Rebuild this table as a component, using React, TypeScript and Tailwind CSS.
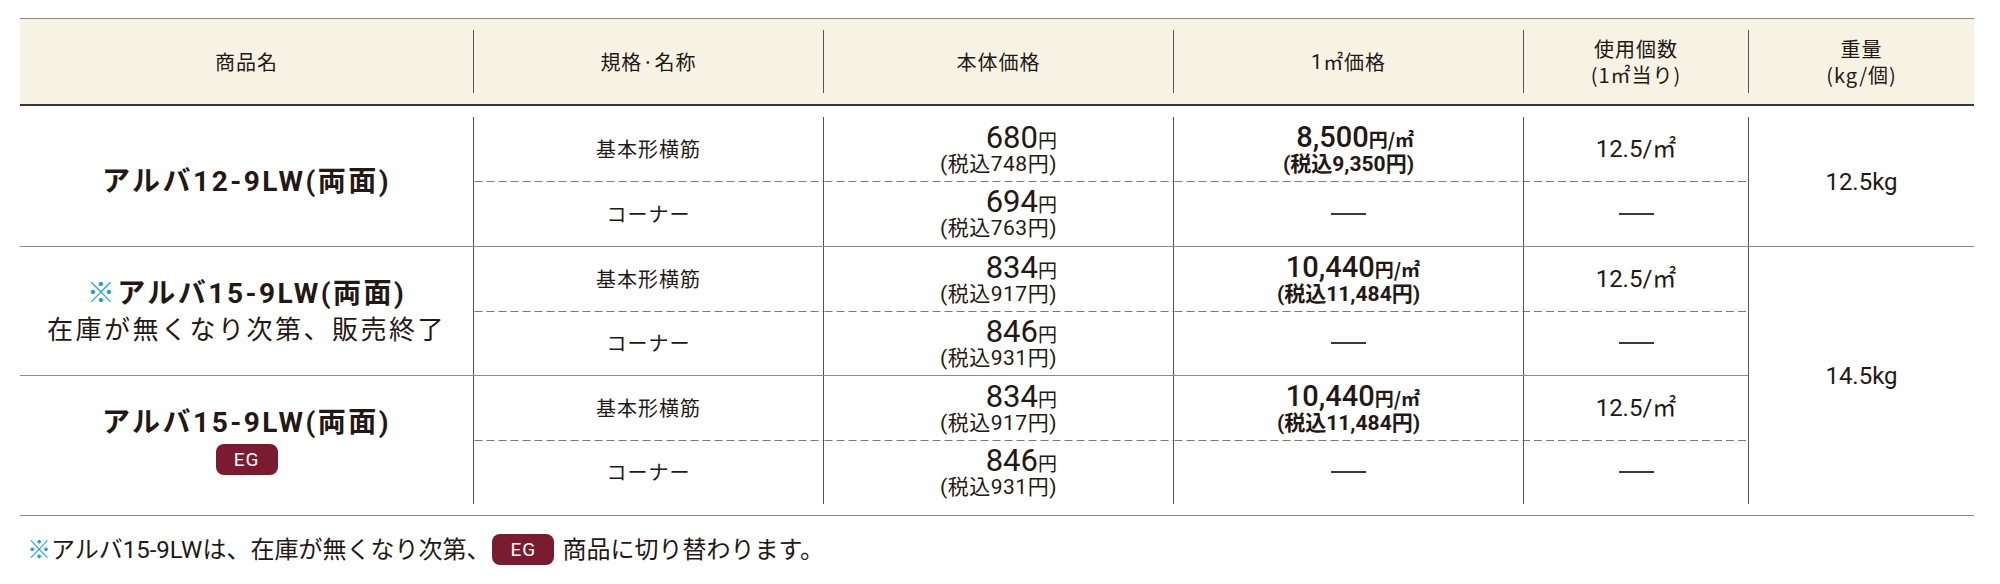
import React from "react";

const JP = "font-['Roboto','Noto_Sans_CJK_JP',sans-serif]";
const CJK = "font-['Noto_Sans_CJK_JP',sans-serif]";

const dash =
  "bg-[linear-gradient(to_right,#7a7a7a_0_8px,transparent_8px_12px)] bg-[length:12px_1px] bg-repeat-x bg-top";

function Yen({ v, tax }: { v: string; tax: string }) {
  return (
    <div className="inline-flex flex-col items-end leading-none">
      <div className="flex items-baseline">
        <span className={`${JP} text-[31px] leading-[29px]`}>{v}</span>
        <span className={`${CJK} text-[19px]`}>円</span>
      </div>
      <div className={`${JP} text-[21px] leading-[24px] tracking-[0.5px]`}>
        (税込{tax}円)
      </div>
    </div>
  );
}

function M2({ v, tax }: { v: string; tax: string }) {
  return (
    <div className="inline-flex flex-col items-end leading-none font-bold">
      <div className="flex items-baseline">
        <span className={`${JP} text-[29px] leading-[28px] font-medium`}>{v}</span>
        <span className={`${CJK} text-[19px] font-bold`}>円/㎡</span>
      </div>
      <div className={`${JP} text-[21px] leading-[24px] mt-[1px] font-bold`}>
        (税込{tax}円)
      </div>
    </div>
  );
}

function Dash() {
  return <div className="w-[35px] h-[2px] bg-[#3a3a3a]" aria-label="—" />;
}

function Cell({
  children,
  className = "",
}: {
  children?: React.ReactNode;
  className?: string;
}) {
  return (
    <div
      className={`w-[350px] shrink-0 border-l border-[#555] flex items-center justify-center ${className}`}
    >
      {children}
    </div>
  );
}

function SubRow({
  spec,
  price,
  m2,
  usage,
  dashed,
  h,
}: {
  spec: string;
  price: React.ReactNode;
  m2: React.ReactNode;
  usage: React.ReactNode;
  dashed?: boolean;
  h: string;
}) {
  const d = dashed ? dash : "";
  return (
    <div className={`flex ${h}`}>
      <Cell className={`${d} ${CJK} text-[20px] tracking-[1px]`}>{spec}</Cell>
      <Cell className={d}>{price}</Cell>
      <Cell className={d}>{m2}</Cell>
      <Cell className={`${d} !w-[225px] ${JP} text-[24px]`}>{usage}</Cell>
    </div>
  );
}

function EG({ className = "" }: { className?: string }) {
  return (
    <span
      className={`inline-flex items-center justify-center w-[62px] h-[31px] rounded-[8px] bg-[#7b1b30] text-white ${JP} text-[19px] tracking-[1px] leading-none ${className}`}
    >
      EG
    </span>
  );
}

const NAME = `${JP} font-bold text-[28px] tracking-[2.5px] leading-[34px]`;

export default function App() {
  return (
    <div className="w-[2000px] h-[584px] bg-white text-[#231815] pt-[18px] pl-[20px]">
      <div className="w-[1954px]">
        {/* header */}
        <div
          className={`h-[88px] bg-[#f6f3e5] border-t border-[#8c8c8c] border-b-2 border-b-[#3b3634] flex py-[11px] ${CJK} text-[20px] tracking-[1px] leading-[26px]`}
        >
          <div className="w-[453px] flex items-center justify-center">商品名</div>
          <div className="w-[350px] border-l border-[#555] flex items-center justify-center">規格·名称</div>
          <div className="w-[350px] border-l border-[#555] flex items-center justify-center">本体価格</div>
          <div className="w-[350px] border-l border-[#555] flex items-center justify-center">
            <span className={JP}>1</span>㎡価格
          </div>
          <div className="w-[225px] border-l border-[#555] flex flex-col items-center justify-center text-center">
            <span>使用個数</span>
            <span>(1㎡当り)</span>
          </div>
          <div className="w-[226px] border-l border-[#555] flex flex-col items-center justify-center text-center">
            <span>重量</span>
            <span>(kg/個)</span>
          </div>
        </div>

        {/* group 1 */}
        <div className="flex border-b border-[#8c8c8c] pt-[11px]">
          <div className={`w-[453px] flex items-center justify-center ${NAME}`}>
            アルバ12-9LW(両面)
          </div>
          <div className="flex flex-col">
            <SubRow
              h="h-[64px]"
              spec="基本形横筋"
              price={<Yen v="680" tax="748" />}
              m2={<M2 v="8,500" tax="9,350" />}
              usage="12.5/㎡"
            />
            <SubRow
              h="h-[65px]"
              dashed
              spec="コーナー"
              price={<Yen v="694" tax="763" />}
              m2={<Dash />}
              usage={<Dash />}
            />
          </div>
          <div className={`w-[226px] border-l border-[#555] flex items-center justify-center ${JP} text-[24px]`}>
            12.5kg
          </div>
        </div>

        {/* groups 2 & 3 */}
        <div className="flex border-b border-[#8c8c8c]">
          <div className="flex flex-col w-[1728px]">
            <div className="flex border-b border-[#8c8c8c]">
              <div className="w-[453px] flex flex-col items-center justify-center">
                <div className={NAME}>
                  <span className="text-[#1a9fe0]">※</span>アルバ15-9LW(両面)
                </div>
                <div className={`${CJK} text-[26px] tracking-[2.5px] leading-[34px]`}>
                  在庫が無くなり次第、販売終了
                </div>
              </div>
              <div className="flex flex-col">
                <SubRow
                  h="h-[64px]"
                  spec="基本形横筋"
                  price={<Yen v="834" tax="917" />}
                  m2={<M2 v="10,440" tax="11,484" />}
                  usage="12.5/㎡"
                />
                <SubRow
                  h="h-[64px]"
                  dashed
                  spec="コーナー"
                  price={<Yen v="846" tax="931" />}
                  m2={<Dash />}
                  usage={<Dash />}
                />
              </div>
            </div>
            <div className="flex pb-[11px]">
              <div className="w-[453px] flex flex-col items-center justify-center gap-[4px]">
                <div className={NAME}>アルバ15-9LW(両面)</div>
                <EG />
              </div>
              <div className="flex flex-col">
                <SubRow
                  h="h-[64px]"
                  spec="基本形横筋"
                  price={<Yen v="834" tax="917" />}
                  m2={<M2 v="10,440" tax="11,484" />}
                  usage="12.5/㎡"
                />
                <SubRow
                  h="h-[64px]"
                  dashed
                  spec="コーナー"
                  price={<Yen v="846" tax="931" />}
                  m2={<Dash />}
                  usage={<Dash />}
                />
              </div>
            </div>
          </div>
          <div className="w-[226px] pb-[11px] flex">
            <div className={`flex-1 border-l border-[#555] flex items-center justify-center ${JP} text-[24px]`}>
              14.5kg
            </div>
          </div>
        </div>

        {/* footnote */}
        <div className={`mt-[18px] pl-[7px] flex items-center h-[31px] ${JP} text-[24px]`}>
          <span className="text-[#1a9fe0]">※</span>
          <span>アルバ15-9LWは、在庫が無くなり次第、</span>
          <EG className="ml-[2px] mr-[8px]" />
          <span>商品に切り替わります。</span>
        </div>
      </div>
    </div>
  );
}
